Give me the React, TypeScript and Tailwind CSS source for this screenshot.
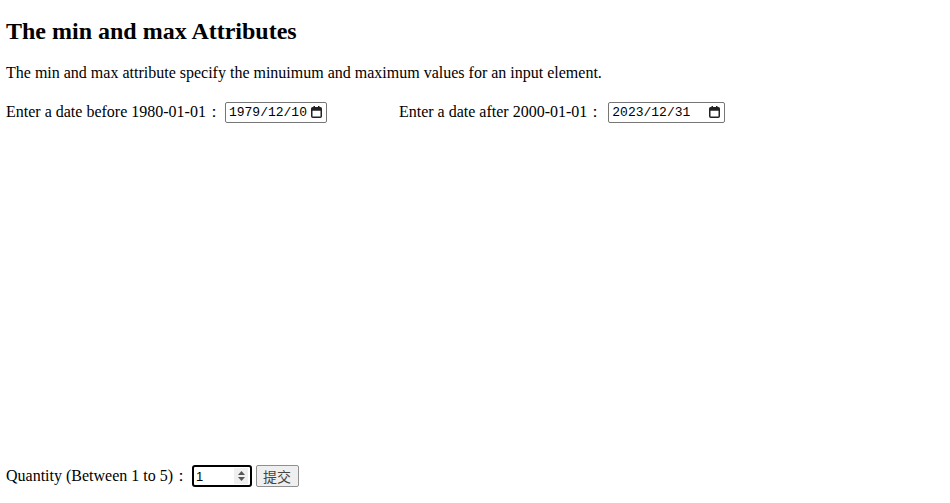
import React from 'react';

// calendar glyph used by the fake date inputs
function CalendarIcon() {
  return (
    <svg width="11" height="12" viewBox="0 0 11 12" className="shrink-0">
      <rect x="2.5" y="0" width="1.5" height="3" fill="#222" />
      <rect x="7" y="0" width="1.5" height="3" fill="#222" />
      <rect x="0.75" y="1.75" width="9.5" height="9.5" rx="1" fill="none" stroke="#222" strokeWidth="1.5" />
      <rect x="0.75" y="1.75" width="9.5" height="3" fill="#222" />
    </svg>
  );
}

function DateBox({ value, width }: { value: string; width: string }) {
  return (
    <div
      className={`flex h-[21px] items-center justify-between rounded-[2px] border border-[#767676] bg-white pl-[3px] pr-[4px] ${width}`}
    >
      <span className="font-['Liberation_Mono',monospace] text-[13px] leading-none text-black">{value}</span>
      <CalendarIcon />
    </div>
  );
}

function NumberBox({ value }: { value: string }) {
  return (
    <div className="flex h-[22px] w-[60px] items-center justify-between rounded-[3px] border-2 border-black bg-white pl-[2px] pr-[2px]">
      <span className="font-['Liberation_Sans',sans-serif] text-[13px] leading-none text-black">{value}</span>
      <div className="flex h-[16px] w-[14px] flex-col items-center justify-center gap-[2px] bg-[#efefef]">
        <svg width="7" height="4" viewBox="0 0 7 4"><path d="M0 4 L3.5 0 L7 4 Z" fill="#555" /></svg>
        <svg width="7" height="4" viewBox="0 0 7 4"><path d="M0 0 L3.5 4 L7 0 Z" fill="#555" /></svg>
      </div>
    </div>
  );
}

export default function App() {
  return (
    <div className="flex min-h-[503px] w-[950px] flex-col bg-white px-[6px] font-['Liberation_Serif',serif] text-black">
      <h1 className="mt-[16px] text-[24px] font-bold leading-[30px]">The min and max Attributes</h1>

      <p className="mt-[18px] text-[16px] leading-[18px]">
        The min and max attribute specify the minuimum and maximum values for an input element.
      </p>

      <form className="flex flex-1 flex-col">
        <div className="mt-[18px] flex items-center text-[16px]">
          <span>Enter a date before 1980-01-01：</span>
          <div className="ml-[3px]">
            <DateBox value="1979/12/10" width="w-[102px]" />
          </div>
          <span className="ml-[72px]">Enter a date after 2000-01-01：</span>
          <div className="ml-[5px]">
            <DateBox value="2023/12/31" width="w-[117px]" />
          </div>
        </div>

        <div className="mt-auto mb-[15px] flex items-center text-[16px]">
          <span>Quantity (Between 1 to 5)：</span>
          <div className="ml-[3px]">
            <NumberBox value="1" />
          </div>
          <button
            type="button"
            className="ml-[4px] h-[22px] rounded-[2px] border border-[#8f8f8f] bg-[#efefef] pl-[6px] pr-[7px] font-['Noto_Sans_CJK_SC',sans-serif] text-[14px] leading-none text-[#444]"
          >
            提交
          </button>
        </div>
      </form>
    </div>
  );
}
